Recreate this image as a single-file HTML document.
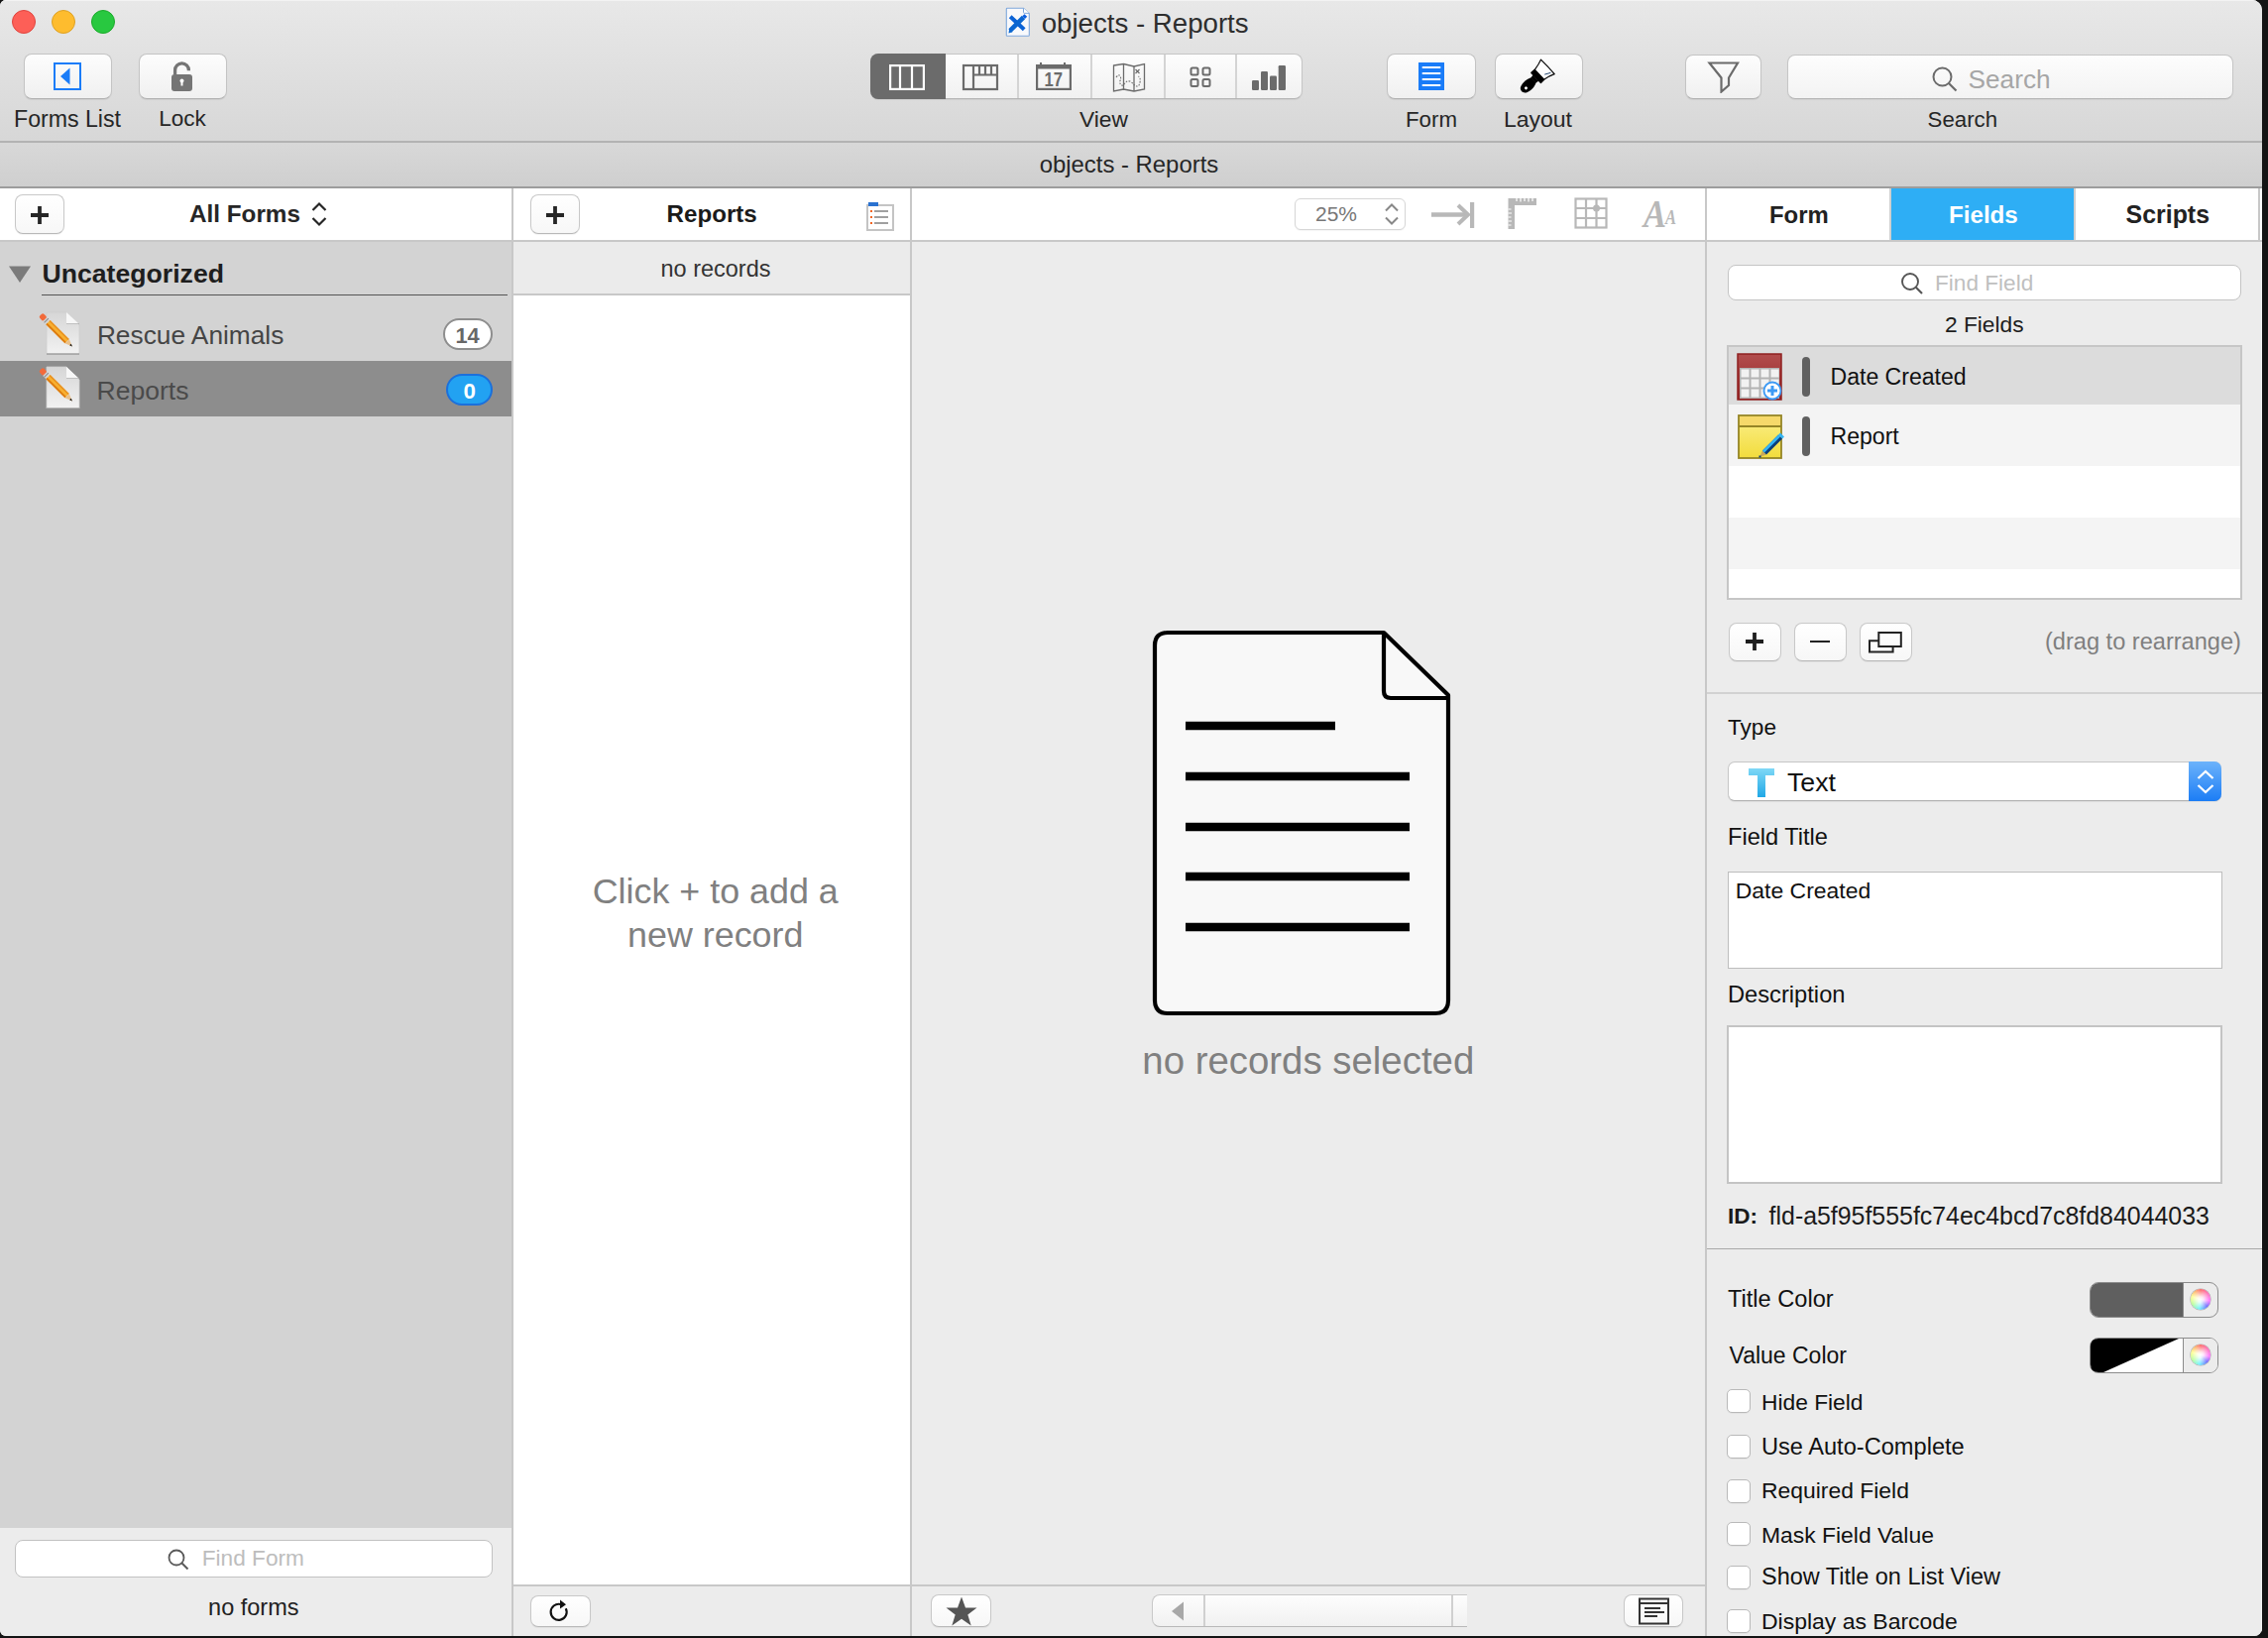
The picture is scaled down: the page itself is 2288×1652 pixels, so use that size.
<!DOCTYPE html><html><head><meta charset="utf-8"><style>
html,body{margin:0;padding:0;width:2288px;height:1652px;overflow:hidden;background:#141414;}
#w{position:absolute;left:0;top:0;width:2282px;height:1650px;border-radius:6px 10px 8px 6px;overflow:hidden;background:#ececec;}
.a{position:absolute;}
.t{position:absolute;white-space:nowrap;font-family:"Liberation Sans",sans-serif;}
</style></head><body><div id="w">
<div class="a" style="left:0px;top:0px;width:2282px;height:142px;background:linear-gradient(#e8e8e8,#d7d7d7);"></div>
<div class="a" style="left:0px;top:0px;width:2282px;height:1px;background:#f3f3f3;"></div>
<div class="a" style="left:0px;top:142px;width:2282px;height:2px;background:#b3b3b3;"></div>
<div class="a" style="left:12px;top:10px;width:24px;height:24px;background:#fd5f57;border:1px solid #e0443e;border-radius:50%;box-sizing:border-box;"></div>
<div class="a" style="left:52px;top:10px;width:24px;height:24px;background:#febc2e;border:1px solid #dea123;border-radius:50%;box-sizing:border-box;"></div>
<div class="a" style="left:92px;top:10px;width:24px;height:24px;background:#28c840;border:1px solid #1aab29;border-radius:50%;box-sizing:border-box;"></div>
<svg class="a" style="left:1014px;top:7px" width="26" height="31" viewBox="0 0 26 31"><path d="M1.3 2 Q1.3 1.2 2 1.2 H18.5 L24.3 6.8 V28.5 Q24.3 29.3 23.5 29.3 H2 Q1.3 29.3 1.3 28.5 Z" fill="#f8f9fc" stroke="#7fa8dc" stroke-width="1.1"/><path d="M18.5 1.2 V5.6 Q18.5 6.3 19.2 6.3 H24.3" fill="#fff" stroke="#7fa8dc" stroke-width="1"/><path d="M5.2 9.8 L19.2 22.8" stroke="#0a62d6" stroke-width="4"/><path d="M5 23.8 L18.5 10.5" stroke="#0a66d0" stroke-width="4.6"/><path d="M3.5 26.5 L4.2 22 L7.5 25.2 Z" fill="#0a66d0"/><path d="M17.3 9.2 L19.5 7.2 L22.2 9.8 L20 12 Z" fill="#0a5ee0"/></svg>
<div class="t" style="left:1050.70px;top:9.59px;font-size:27.65px;line-height:27.65px;color:#2e2e2e;">objects - Reports</div>
<div class="a" style="left:23.5px;top:55px;width:89.0px;height:44px;margin-top:-0.7px;height:45.3px !important;background:linear-gradient(#fdfdfd,#f0f0f0);border:1px solid #c4c4c4;border-bottom-color:#b0b0b0;border-radius:8px;box-sizing:border-box;box-shadow:0 1px 1px rgba(0,0,0,0.06);"></div>
<svg class="a" style="left:53px;top:62px" width="30" height="30" viewBox="0 0 30 30"><rect x="2" y="2" width="26" height="26" fill="none" stroke="#1a7cf8" stroke-width="2"/><path d="M8 15 L17.5 6.5 V23.5 Z" fill="#1a7cf8"/></svg>
<div class="a" style="left:139.5px;top:55px;width:89.0px;height:44px;margin-top:-0.7px;height:45.3px !important;background:linear-gradient(#fdfdfd,#f0f0f0);border:1px solid #c4c4c4;border-bottom-color:#b0b0b0;border-radius:8px;box-sizing:border-box;box-shadow:0 1px 1px rgba(0,0,0,0.06);"></div>
<svg class="a" style="left:170px;top:60px" width="28" height="34" viewBox="0 0 28 34"><path d="M6.6 15.5 V10.7 A6.9 6.9 0 0 1 20.4 10.7 V11.3" fill="none" stroke="#757575" stroke-width="3.3"/><rect x="3" y="15" width="21" height="17" rx="3" fill="#757575"/><circle cx="13.5" cy="21.5" r="2" fill="#fff"/><rect x="12.5" y="21.5" width="2" height="5" fill="#fff"/></svg>
<div class="t" style="left:14.00px;top:108.91px;font-size:23.14px;line-height:23.14px;color:#262626;">Forms List</div>
<div class="t" style="left:160.15px;top:109.40px;font-size:22.55px;line-height:22.55px;color:#262626;">Lock</div>
<div class="a" style="left:878px;top:54px;width:436px;height:46px;background:linear-gradient(#fdfdfd,#f1f1f1);border:1px solid #c6c6c6;border-bottom-color:#b4b4b4;border-radius:8px;box-sizing:border-box;box-shadow:0 1px 1px rgba(0,0,0,0.06);"></div>
<div class="a" style="left:878px;top:54px;width:76px;height:46px;background:#6b6b6b;border-radius:8px 0 0 8px;"></div>
<div class="a" style="left:1026px;top:55px;width:2px;height:44px;background:#d4d4d4;"></div>
<div class="a" style="left:1100px;top:55px;width:2px;height:44px;background:#d4d4d4;"></div>
<div class="a" style="left:1174px;top:55px;width:2px;height:44px;background:#d4d4d4;"></div>
<div class="a" style="left:1246px;top:55px;width:2px;height:44px;background:#d4d4d4;"></div>
<svg class="a" style="left:897px;top:65px" width="36" height="26" viewBox="0 0 36 26"><rect x="1.1" y="1.1" width="33.8" height="23.8" fill="none" stroke="#fff" stroke-width="2.2"/><path d="M11 1 V25 M23 1 V25" stroke="#fff" stroke-width="2.2"/></svg>
<svg class="a" style="left:970px;top:64px" width="38" height="28" viewBox="0 0 38 28"><rect x="2" y="2" width="34" height="24" fill="none" stroke="#6b6b6b" stroke-width="2.2"/><path d="M12 2 V26 M12 11.5 H36 M18 2 V11.5 M24 2 V11.5 M30 2 V11.5" stroke="#6b6b6b" stroke-width="2.2"/></svg>
<svg class="a" style="left:1044px;top:62px" width="38" height="30" viewBox="0 0 38 30"><rect x="2.1" y="4.1" width="33.8" height="23.8" fill="none" stroke="#6b6b6b" stroke-width="2.2"/><rect x="1" y="3" width="36" height="4.5" fill="#6b6b6b"/><rect x="5" y="1" width="2" height="3" fill="#6b6b6b"/><rect x="29" y="1" width="2" height="3" fill="#6b6b6b"/><text x="9.5" y="25" font-family="Liberation Sans" font-weight="700" font-size="21" textLength="18.5" lengthAdjust="spacingAndGlyphs" fill="#6b6b6b">17</text></svg>
<svg class="a" style="left:1122px;top:63px" width="34" height="30" viewBox="0 0 34 30"><path d="M1.5 3 L11.5 1.5 L22 4 L32.5 1.5 V27 L22 29 L11.5 27 L1.5 29 Z" fill="none" stroke="#6b6b6b" stroke-width="1.3"/><path d="M11.5 1.5 V27 M22 4 V29" stroke="#6b6b6b" stroke-width="1.3"/><path d="M4 15 Q7 11 8.5 14.5 Q9 18 7.5 19 Q8 24 11.5 23 Q14 18 18 19 Q21 21 22.5 23 Q27 26 28 20 Q29 16 26.5 14" fill="none" stroke="#6b6b6b" stroke-width="1.1" stroke-dasharray="1.6 1.4"/><path d="M23.5 7 L27.5 11 M27.5 7 L23.5 11" stroke="#6b6b6b" stroke-width="1.2"/></svg>
<svg class="a" style="left:1199px;top:67px" width="24" height="22" viewBox="0 0 24 22"><rect x="2.5" y="1.5" width="7" height="7" rx="1.5" fill="none" stroke="#6b6b6b" stroke-width="2"/><rect x="14.5" y="1.5" width="7" height="7" rx="1.5" fill="none" stroke="#6b6b6b" stroke-width="2"/><rect x="2.5" y="13" width="7" height="7" rx="1.5" fill="none" stroke="#6b6b6b" stroke-width="2"/><rect x="14.5" y="13" width="7" height="7" rx="1.5" fill="none" stroke="#6b6b6b" stroke-width="2"/></svg>
<svg class="a" style="left:1262px;top:65px" width="36" height="27" viewBox="0 0 36 27"><rect x="1" y="16" width="7" height="10" rx="1.2" fill="#6b6b6b"/><rect x="10" y="7" width="7" height="19" rx="1.2" fill="#6b6b6b"/><rect x="19" y="11.5" width="7" height="14.5" rx="1.2" fill="#6b6b6b"/><rect x="27.7" y="1" width="7.3" height="25" rx="1.2" fill="#6b6b6b"/></svg>
<div class="t" style="left:1089.00px;top:109.23px;font-size:22.76px;line-height:22.76px;color:#262626;">View</div>
<div class="a" style="left:1398.5px;top:55px;width:90.0px;height:44px;margin-top:-0.7px;height:45.3px !important;background:linear-gradient(#fdfdfd,#f0f0f0);border:1px solid #c4c4c4;border-bottom-color:#b0b0b0;border-radius:8px;box-sizing:border-box;box-shadow:0 1px 1px rgba(0,0,0,0.06);"></div>
<svg class="a" style="left:1430px;top:62px" width="28" height="30" viewBox="0 0 28 30"><rect x="1" y="1" width="26" height="28" fill="#1a7cf8"/><path d="M5.5 6 H22.5 M5.5 12 H22.5 M5.5 18 H22.5 M5.5 24 H22.5" stroke="#fff" stroke-width="2" stroke-linecap="round"/></svg>
<div class="a" style="left:1507.5px;top:55px;width:89.0px;height:44px;margin-top:-0.7px;height:45.3px !important;background:linear-gradient(#fdfdfd,#f0f0f0);border:1px solid #c4c4c4;border-bottom-color:#b0b0b0;border-radius:8px;box-sizing:border-box;box-shadow:0 1px 1px rgba(0,0,0,0.06);"></div>
<svg class="a" style="left:1531px;top:57px" width="42" height="40" viewBox="0 0 42 40"><g transform="translate(30.3 10.4) rotate(46.7)"><path d="M-10 0 Q0 -0.5 10 0 Q7.8 5 6.8 11.5 H-6.8 Q-7.8 5 -10 0 Z" fill="#fff" stroke="#000" stroke-width="1.2" stroke-linejoin="round"/><path d="M6.5 1.8 L3.5 7.5" stroke="#1b3f6a" stroke-width="0.9"/><rect x="-7.6" y="11" width="15.2" height="5.8" rx="0.8" fill="#000"/><path d="M-4.2 16.5 H4.2 L3.6 20 H-3.6 Z" fill="#000"/><path d="M-3.6 19.5 C-6.2 24 -5.8 32 -3.2 34.8 Q0 37.2 3.2 34.8 C5.8 32 6.2 24 3.6 19.5 Z" fill="#000"/><circle cx="0.6" cy="30.6" r="1.5" fill="#fff"/></g></svg>
<div class="t" style="left:1418.00px;top:109.62px;font-size:22.29px;line-height:22.29px;color:#262626;">Form</div>
<div class="t" style="left:1517.00px;top:109.04px;font-size:22.98px;line-height:22.98px;color:#262626;">Layout</div>
<div class="a" style="left:1699.5px;top:55.5px;width:77.0px;height:44.0px;margin-top:-0.7px;height:45.3px !important;background:linear-gradient(#fdfdfd,#f0f0f0);border:1px solid #c4c4c4;border-bottom-color:#b0b0b0;border-radius:8px;box-sizing:border-box;box-shadow:0 1px 1px rgba(0,0,0,0.06);"></div>
<svg class="a" style="left:1722px;top:62px" width="34" height="32" viewBox="0 0 34 32"><path d="M2.5 1.5 H31 L22 16.5 V24 L14.5 30.5 V16.5 Z" fill="none" stroke="#6b6b6b" stroke-width="2.2" stroke-linejoin="miter"/></svg>
<div class="a" style="left:1803px;top:55px;width:450px;height:45px;background:linear-gradient(#fdfdfd,#f3f3f3);border:1px solid #c6c6c6;border-bottom-color:#b4b4b4;border-radius:8px;box-sizing:border-box;box-shadow:0 1px 1px rgba(0,0,0,0.05);"></div>
<svg class="a" style="left:1948px;top:66px" width="28" height="28" viewBox="0 0 28 28"><circle cx="11.5" cy="11.5" r="9" fill="none" stroke="#6b6b6b" stroke-width="2"/><path d="M18 18 L25.5 25.5" stroke="#6b6b6b" stroke-width="2.2"/></svg>
<div class="t" style="left:1985.60px;top:66.81px;font-size:26.20px;line-height:26.20px;color:#a6a6a6;">Search</div>
<div class="t" style="left:1944.60px;top:109.68px;font-size:22.23px;line-height:22.23px;color:#262626;">Search</div>
<div class="a" style="left:0px;top:144px;width:2282px;height:44px;background:linear-gradient(#d8d8d8,#cfcfcf);"></div>
<div class="a" style="left:0px;top:188px;width:2282px;height:2px;background:#9d9d9d;"></div>
<div class="t" style="left:1048.65px;top:154.26px;font-size:23.90px;line-height:23.90px;color:#262626;">objects - Reports</div>
<div class="a" style="left:0px;top:190px;width:2282px;height:52px;background:#fff;"></div>
<div class="a" style="left:0px;top:242px;width:2282px;height:2px;background:#c8c8c8;"></div>
<div class="a" style="left:0px;top:244px;width:516px;height:1297px;background:#d3d3d3;"></div>
<div class="a" style="left:0px;top:1541px;width:516px;height:109px;background:#ececec;"></div>
<div class="a" style="left:516px;top:190px;width:2px;height:1460px;background:#c8c8c8;"></div>
<div class="a" style="left:518px;top:244px;width:400px;height:52px;background:#ebebeb;"></div>
<div class="a" style="left:518px;top:296px;width:400px;height:2px;background:#c8c8c8;"></div>
<div class="a" style="left:518px;top:298px;width:400px;height:1300px;background:#fff;"></div>
<div class="a" style="left:518px;top:1598px;width:400px;height:2px;background:#c8c8c8;"></div>
<div class="a" style="left:518px;top:1600px;width:400px;height:50px;background:#ececec;"></div>
<div class="a" style="left:918px;top:190px;width:2px;height:1460px;background:#c8c8c8;"></div>
<div class="a" style="left:920px;top:244px;width:800px;height:1354px;background:#ececec;"></div>
<div class="a" style="left:920px;top:1598px;width:800px;height:2px;background:#c8c8c8;"></div>
<div class="a" style="left:920px;top:1600px;width:800px;height:50px;background:#ececec;"></div>
<div class="a" style="left:1720px;top:190px;width:2px;height:1460px;background:#c8c8c8;"></div>
<div class="a" style="left:1722px;top:244px;width:560px;height:1406px;background:#ececec;"></div>
<div class="a" style="left:15px;top:196px;width:50px;height:40px;background:linear-gradient(#ffffff,#f7f7f7);border:1px solid #c8c8c8;border-bottom-color:#b8b8b8;border-radius:8px;box-sizing:border-box;box-shadow:0 1px 1px rgba(0,0,0,0.05);"></div>
<svg class="a" style="left:27px;top:204px" width="26" height="26" viewBox="0 0 26 26"><path d="M13 4 V22 M4 13 H22" stroke="#262626" stroke-width="3.8"/></svg>
<div class="t" style="left:191.00px;top:204.24px;font-size:24.28px;line-height:24.28px;color:#262626;font-weight:700;">All Forms</div>
<svg class="a" style="left:312px;top:203px" width="20" height="26" viewBox="0 0 20 26"><path d="M3.5 9 L10 2.5 L16.5 9 M3.5 17 L10 23.5 L16.5 17" fill="none" stroke="#262626" stroke-width="2.2"/></svg>
<svg class="a" style="left:8px;top:267px" width="24" height="19" viewBox="0 0 24 19"><path d="M1 1.5 H23 L12 18 Z" fill="#7b7b7b"/></svg>
<div class="t" style="left:42.50px;top:262.95px;font-size:26.63px;line-height:26.63px;color:#1e1e1e;font-weight:700;">Uncategorized</div>
<div class="a" style="left:42px;top:297px;width:470px;height:1px;background:#555;"></div>
<div class="a" style="left:0px;top:364px;width:516px;height:56px;background:#8d8d8d;"></div>
<svg class="a" style="left:38px;top:314px" width="44" height="46" viewBox="0 0 44 46"><defs><linearGradient id="dg1" x1="0" y1="0" x2="0" y2="1"><stop offset="0" stop-color="#d6d6d6"/><stop offset="1" stop-color="#f2f2f2"/></linearGradient></defs><path d="M9 1 H29 L42 14 V43 H9 Z" fill="url(#dg1)" stroke="#cfcfcf" stroke-width="0.8"/><path d="M9 43 H42" stroke="#6a6a6a" stroke-width="1.4" opacity="0.5"/><path d="M29 1 V12 Q29 13 30 13 H42 Z" fill="#f7f7f7"/><path d="M29 12.5 H42" stroke="#8a8a8a" stroke-width="1" opacity="0.5"/><g transform="translate(4.5 5) rotate(-45)"><rect x="-3" y="-2" width="6" height="6.5" rx="2" fill="#f26a3a"/><rect x="-3" y="4" width="6" height="4.5" fill="#d4d4d4"/><rect x="-3" y="5.5" width="6" height="1" fill="#8a8a8a"/><rect x="-3" y="8.5" width="6" height="27" fill="#f8b030"/><rect x="-3" y="8.5" width="1.8" height="27" fill="#dd7a10"/><rect x="1.4" y="8.5" width="1.6" height="27" fill="#e89020"/><path d="M-3 35.5 L3 35.5 L0 43 Z" fill="#e9c08a"/><path d="M-1.1 40.3 L1.1 40.3 L0 43 Z" fill="#111"/></g></svg>
<svg class="a" style="left:38px;top:369px" width="44" height="46" viewBox="0 0 44 46"><defs><linearGradient id="dg2" x1="0" y1="0" x2="0" y2="1"><stop offset="0" stop-color="#d6d6d6"/><stop offset="1" stop-color="#f2f2f2"/></linearGradient></defs><path d="M9 1 H29 L42 14 V43 H9 Z" fill="url(#dg2)" stroke="#cfcfcf" stroke-width="0.8"/><path d="M9 43 H42" stroke="#6a6a6a" stroke-width="1.4" opacity="0.5"/><path d="M29 1 V12 Q29 13 30 13 H42 Z" fill="#f7f7f7"/><path d="M29 12.5 H42" stroke="#8a8a8a" stroke-width="1" opacity="0.5"/><g transform="translate(4.5 5) rotate(-45)"><rect x="-3" y="-2" width="6" height="6.5" rx="2" fill="#f26a3a"/><rect x="-3" y="4" width="6" height="4.5" fill="#d4d4d4"/><rect x="-3" y="5.5" width="6" height="1" fill="#8a8a8a"/><rect x="-3" y="8.5" width="6" height="27" fill="#f8b030"/><rect x="-3" y="8.5" width="1.8" height="27" fill="#dd7a10"/><rect x="1.4" y="8.5" width="1.6" height="27" fill="#e89020"/><path d="M-3 35.5 L3 35.5 L0 43 Z" fill="#e9c08a"/><path d="M-1.1 40.3 L1.1 40.3 L0 43 Z" fill="#111"/></g></svg>
<div class="t" style="left:97.90px;top:325.14px;font-size:26.29px;line-height:26.29px;color:#454545;">Rescue Animals</div>
<div class="a" style="left:447px;top:321px;width:50px;height:32px;background:#fff;border:2px solid #8e8e8e;border-radius:16px;box-sizing:border-box;"></div>
<div class="t" style="left:459.50px;top:327.98px;font-size:21.75px;line-height:21.75px;color:#676767;font-weight:700;">14</div>
<div class="t" style="left:97.50px;top:380.72px;font-size:26.55px;line-height:26.55px;color:#4a4a4a;">Reports</div>
<div class="a" style="left:450px;top:377px;width:47px;height:32px;background:#22a2f2;border:2px solid #1b70dc;border-radius:16px;box-sizing:border-box;"></div>
<div class="t" style="left:467.60px;top:384.18px;font-size:22.34px;line-height:22.34px;color:#fff;font-weight:700;">0</div>
<div class="a" style="left:15px;top:1553px;width:482px;height:38px;background:#fff;border:1px solid #c2c2c2;border-radius:8px;box-sizing:border-box;"></div>
<svg class="a" style="left:168px;top:1561px" width="26" height="26" viewBox="0 0 26 26"><circle cx="10" cy="10" r="7.5" fill="none" stroke="#5a5a5a" stroke-width="1.8"/><path d="M15.5 15.5 L21.5 21.5" stroke="#5a5a5a" stroke-width="2"/></svg>
<div class="t" style="left:203.70px;top:1559.51px;font-size:22.67px;line-height:22.67px;color:#bdbdbd;">Find Form</div>
<div class="t" style="left:210.05px;top:1609.98px;font-size:23.52px;line-height:23.52px;color:#222;">no forms</div>
<div class="a" style="left:535px;top:196px;width:50px;height:40px;background:linear-gradient(#ffffff,#f7f7f7);border:1px solid #c8c8c8;border-bottom-color:#b8b8b8;border-radius:8px;box-sizing:border-box;box-shadow:0 1px 1px rgba(0,0,0,0.05);"></div>
<svg class="a" style="left:547px;top:204px" width="26" height="26" viewBox="0 0 26 26"><path d="M13 4 V22 M4 13 H22" stroke="#262626" stroke-width="3.8"/></svg>
<div class="t" style="left:672.60px;top:204.26px;font-size:24.14px;line-height:24.14px;color:#1a1a1a;font-weight:700;">Reports</div>
<svg class="a" style="left:872px;top:202px" width="32" height="33" viewBox="0 0 32 33"><rect x="3" y="5" width="26" height="25" fill="#fff" stroke="#c4c4c4" stroke-width="2"/><rect x="4" y="2" width="10" height="4" fill="#2a72d0"/><rect x="6" y="10" width="2" height="2" fill="#f26522"/><rect x="6" y="16" width="2" height="2" fill="#f26522"/><rect x="6" y="22" width="2" height="2" fill="#f26522"/><path d="M10 11 H24 M10 17 H24 M10 23 H24" stroke="#a0a0a0" stroke-width="2"/></svg>
<div class="t" style="left:666.50px;top:259.61px;font-size:23.49px;line-height:23.49px;color:#333;">no records</div>
<div class="t" style="left:597.75px;top:882.17px;font-size:35.83px;line-height:35.83px;color:#808080;">Click + to add a</div>
<div class="t" style="left:633.00px;top:926.14px;font-size:35.86px;line-height:35.86px;color:#808080;">new record</div>
<div class="a" style="left:535px;top:1609px;width:61px;height:32px;background:linear-gradient(#ffffff,#f7f7f7);border:1px solid #c8c8c8;border-bottom-color:#b8b8b8;border-radius:8px;box-sizing:border-box;box-shadow:0 1px 1px rgba(0,0,0,0.05);"></div>
<svg class="a" style="left:553px;top:1612px" width="26" height="26" viewBox="0 0 26 26"><path d="M17.8 10.2 A8 8 0 1 1 12.5 6" fill="none" stroke="#111" stroke-width="2.2"/><path d="M12 1.5 L18 6.2 L12 10.5 Z" fill="#111"/></svg>
<div class="a" style="left:1306px;top:200px;width:112px;height:32px;background:#fff;border:1px solid #d6d6d6;border-radius:6px;box-sizing:border-box;box-shadow:0 1px 1px rgba(0,0,0,0.04);"></div>
<div class="t" style="left:1327.00px;top:206.34px;font-size:20.97px;line-height:20.97px;color:#777;">25%</div>
<svg class="a" style="left:1395px;top:204px" width="18" height="24" viewBox="0 0 18 24"><path d="M3 8.5 L9 2.5 L15 8.5 M3 15.5 L9 21.5 L15 15.5" fill="none" stroke="#888" stroke-width="2"/></svg>
<svg class="a" style="left:1443px;top:203px" width="46" height="28" viewBox="0 0 46 28"><path d="M1 13.5 H37" stroke="#b8b8b8" stroke-width="4.5"/><path d="M28 4 L38 13.5 L28 23" fill="none" stroke="#b8b8b8" stroke-width="4"/><rect x="40" y="1" width="4.2" height="26" fill="#b8b8b8"/></svg>
<svg class="a" style="left:1520px;top:199px" width="31" height="33" viewBox="0 0 31 33"><path d="M1.5 1 H30 V8 H8 V32 H1.5 Z" fill="#b8b8b8"/><path d="M10 1 V4 M14 1 V4.5 M18 1 V4 M22 1 V4.5 M26 1 V4 M1.5 12 H4.5 M1.5 16 H5 M1.5 20 H4.5 M1.5 24 H5 M1.5 28 H4.5" stroke="#fff" stroke-width="1.2"/></svg>
<svg class="a" style="left:1588px;top:199px" width="35" height="33" viewBox="0 0 35 33"><rect x="1.5" y="1.5" width="31" height="29" fill="none" stroke="#b8b8b8" stroke-width="2.2"/><path d="M12 1.5 V30.5 M22.5 1.5 V30.5 M1.5 11 H32.5 M1.5 21 H32.5" stroke="#b8b8b8" stroke-width="2.2"/><circle cx="22.5" cy="11" r="3.5" fill="#b8b8b8"/></svg>
<svg class="a" style="left:1655px;top:198px" width="40" height="34" viewBox="0 0 40 34"><text x="3" y="31" font-family="Liberation Serif" font-style="italic" font-weight="700" font-size="40" textLength="23" lengthAdjust="spacingAndGlyphs" fill="#b8b8b8">A</text><text x="25" y="28" font-family="Liberation Serif" font-style="italic" font-weight="700" font-size="22" textLength="11" lengthAdjust="spacingAndGlyphs" fill="#b8b8b8">A</text></svg>
<svg class="a" style="left:1160px;top:633px" width="306" height="394" viewBox="0 0 306 394"><path d="M17 5 H236 L301 68 V376 Q301 389 288 389 H18 Q5 389 5 376 V18 Q5 5 18 5 Z" fill="#f8f8f8" stroke="#000" stroke-width="4.2" stroke-linejoin="round"/><path d="M236 5 V64 Q236 71 243 71 H301" fill="none" stroke="#000" stroke-width="4.2"/><path d="M36 99 H187 M36 150 H262 M36 201 H262 M36 251 H262 M36 302 H262" stroke="#000" stroke-width="8.5"/></svg>
<div class="t" style="left:1152.35px;top:1050.60px;font-size:38.38px;line-height:38.38px;color:#808080;">no records selected</div>
<div class="a" style="left:939px;top:1608px;width:61px;height:33px;background:linear-gradient(#ffffff,#f7f7f7);border:1px solid #c8c8c8;border-bottom-color:#b8b8b8;border-radius:8px;box-sizing:border-box;box-shadow:0 1px 1px rgba(0,0,0,0.05);"></div>
<svg class="a" style="left:953px;top:1609px" width="34" height="32" viewBox="0 0 34 32"><path d="M17 1.5 L21 12.5 L32.5 12.5 L23.3 19.4 L26.7 30.5 L17 23.8 L7.3 30.5 L10.7 19.4 L1.5 12.5 L13 12.5 Z" fill="#555"/></svg>
<div class="a" style="left:1162px;top:1608px;width:318px;height:33px;background:linear-gradient(#fdfdfd,#f1f1f1);border:1px solid #c8c8c8;border-right:none;border-bottom-color:#b8b8b8;border-radius:8px 0 0 8px;box-sizing:border-box;"></div>
<div class="a" style="left:1214px;top:1609px;width:2px;height:31px;background:#d0d0d0;"></div>
<div class="a" style="left:1464px;top:1609px;width:2px;height:31px;background:#d0d0d0;"></div>
<svg class="a" style="left:1180px;top:1614px" width="16" height="22" viewBox="0 0 16 22"><path d="M14 1.5 V20.5 L2 11 Z" fill="#a8a8a8"/></svg>
<div class="a" style="left:1638px;top:1608px;width:60px;height:33px;background:linear-gradient(#ffffff,#f7f7f7);border:1px solid #c8c8c8;border-bottom-color:#b8b8b8;border-radius:8px;box-sizing:border-box;box-shadow:0 1px 1px rgba(0,0,0,0.05);"></div>
<svg class="a" style="left:1652px;top:1611px" width="34" height="28" viewBox="0 0 34 28"><rect x="2" y="1.5" width="29" height="25" fill="none" stroke="#333" stroke-width="2"/><path d="M2 6 H31 M7 11 H23 M7 15 H27 M7 19 H20" stroke="#333" stroke-width="1.8"/></svg>
<div class="a" style="left:1722px;top:190px;width:560px;height:52px;background:#fff;"></div>
<div class="a" style="left:1907px;top:190px;width:186px;height:52px;background:#2eaef5;"></div>
<div class="a" style="left:1906px;top:190px;width:2px;height:52px;background:#d0d0d0;"></div>
<div class="a" style="left:2092px;top:190px;width:2px;height:52px;background:#d0d0d0;"></div>
<div class="a" style="left:2278px;top:190px;width:2px;height:52px;background:#c8c8c8;"></div>
<div class="a" style="left:2281px;top:244px;width:1px;height:1406px;background:#f6f6f6;"></div>
<div class="t" style="left:1785.00px;top:204.88px;font-size:23.88px;line-height:23.88px;color:#222;font-weight:700;">Form</div>
<div class="t" style="left:1966.00px;top:204.65px;font-size:24.15px;line-height:24.15px;color:#fff;font-weight:700;">Fields</div>
<div class="t" style="left:2144.60px;top:204.02px;font-size:24.90px;line-height:24.90px;color:#222;font-weight:700;">Scripts</div>
<div class="a" style="left:1743px;top:267px;width:518px;height:36px;background:#fff;border:1px solid #c4c4c4;border-radius:8px;box-sizing:border-box;"></div>
<svg class="a" style="left:1916px;top:273px" width="26" height="28" viewBox="0 0 26 28"><circle cx="11" cy="11" r="8" fill="none" stroke="#555" stroke-width="1.9"/><path d="M16.8 16.8 L23 23" stroke="#555" stroke-width="2.1"/></svg>
<div class="t" style="left:1952.00px;top:275.35px;font-size:22.62px;line-height:22.62px;color:#bfbfbf;">Find Field</div>
<div class="t" style="left:1961.90px;top:315.51px;font-size:22.78px;line-height:22.78px;color:#1e1e1e;">2 Fields</div>
<div class="a" style="left:1742px;top:348px;width:520px;height:257px;background:#fff;border:2px solid #c6c6c6;box-sizing:border-box;"></div>
<div class="a" style="left:1744px;top:350px;width:516px;height:58px;background:#dcdcdc;"></div>
<div class="a" style="left:1744px;top:408px;width:516px;height:62px;background:#f4f4f4;"></div>
<div class="a" style="left:1744px;top:522px;width:516px;height:52px;background:#f4f4f4;"></div>
<svg class="a" style="left:1752px;top:356px" width="48" height="50" viewBox="0 0 48 50"><defs><linearGradient id="cg" x1="0" y1="0" x2="0" y2="1"><stop offset="0" stop-color="#b24d4d"/><stop offset="1" stop-color="#952626"/></linearGradient></defs><rect x="1" y="1" width="44" height="46" fill="url(#cg)" stroke="#8f1f1f" stroke-width="1.5"/><rect x="3" y="15" width="40" height="31" fill="#b3b3b3"/><rect x="4.5" y="16.5" width="8" height="8" fill="#f2f2f2"/><rect x="14.5" y="16.5" width="8" height="8" fill="#f2f2f2"/><rect x="24.5" y="16.5" width="8" height="8" fill="#f2f2f2"/><rect x="34.5" y="16.5" width="8" height="8" fill="#f2f2f2"/><rect x="4.5" y="26.5" width="8" height="8" fill="#f2f2f2"/><rect x="14.5" y="26.5" width="8" height="8" fill="#f2f2f2"/><rect x="24.5" y="26.5" width="8" height="8" fill="#f2f2f2"/><rect x="34.5" y="26.5" width="8" height="8" fill="#f2f2f2"/><rect x="4.5" y="36.5" width="8" height="8" fill="#f2f2f2"/><rect x="14.5" y="36.5" width="8" height="8" fill="#f2f2f2"/><rect x="24.5" y="36.5" width="8" height="8" fill="#f2f2f2"/><rect x="34.5" y="36.5" width="8" height="8" fill="#f2f2f2"/><circle cx="36" cy="38" r="8.5" fill="#fff" stroke="#3c9af5" stroke-width="1.8"/><path d="M36 33 V43 M31 38 H41" stroke="#3c9af5" stroke-width="3"/></svg>
<svg class="a" style="left:1751px;top:417.5px" width="50" height="48" viewBox="0 0 50 48"><defs><linearGradient id="ng" x1="0" y1="0" x2="0" y2="1"><stop offset="0" stop-color="#fbef8a"/><stop offset="1" stop-color="#f2dc3c"/></linearGradient></defs><rect x="3" y="1" width="43" height="43" fill="url(#ng)" stroke="#958526" stroke-width="1.8"/><rect x="4" y="2" width="41" height="9.5" fill="#f6d96a"/><path d="M3 12 H46" stroke="#958526" stroke-width="1.8"/><path d="M27 36.5 L31 40.5 L24 43 Z" fill="#c9a95a"/><path d="M27 36.5 L43 20.5 L47 24.5 L31 40.5 Z" fill="#0b3d7a"/><path d="M27 36.5 L43 20.5 L45 22.5 L29 38.5 Z" fill="#33b4f5"/><path d="M43 20.5 L45 18.5 L49 22.5 L47 24.5 Z" fill="#33b4f5"/><rect x="23.5" y="41.5" width="2" height="2" fill="#0b3d7a"/></svg>
<div class="a" style="left:1818px;top:360px;width:8px;height:40px;background:#606060;border-radius:4px;"></div>
<div class="a" style="left:1818px;top:420px;width:8px;height:40px;background:#606060;border-radius:4px;"></div>
<div class="t" style="left:1846.50px;top:368.97px;font-size:23.07px;line-height:23.07px;color:#111;">Date Created</div>
<div class="t" style="left:1846.50px;top:429.36px;font-size:23.08px;line-height:23.08px;color:#111;">Report</div>
<div class="a" style="left:1744px;top:627.5px;width:53px;height:39.0px;background:linear-gradient(#ffffff,#f7f7f7);border:1px solid #c8c8c8;border-bottom-color:#b8b8b8;border-radius:8px;box-sizing:border-box;box-shadow:0 1px 1px rgba(0,0,0,0.05);"></div>
<div class="a" style="left:1810px;top:627.5px;width:53px;height:39.0px;background:linear-gradient(#ffffff,#f7f7f7);border:1px solid #c8c8c8;border-bottom-color:#b8b8b8;border-radius:8px;box-sizing:border-box;box-shadow:0 1px 1px rgba(0,0,0,0.05);"></div>
<div class="a" style="left:1876px;top:627.5px;width:53px;height:39.0px;background:linear-gradient(#ffffff,#f7f7f7);border:1px solid #c8c8c8;border-bottom-color:#b8b8b8;border-radius:8px;box-sizing:border-box;box-shadow:0 1px 1px rgba(0,0,0,0.05);"></div>
<svg class="a" style="left:1757px;top:634px" width="26" height="26" viewBox="0 0 26 26"><path d="M13 4 V22 M4 13 H22" stroke="#1e1e1e" stroke-width="3.8"/></svg>
<svg class="a" style="left:1823px;top:634px" width="26" height="26" viewBox="0 0 26 26"><path d="M3 13 H23" stroke="#222" stroke-width="2"/></svg>
<svg class="a" style="left:1884px;top:635px" width="36" height="26" viewBox="0 0 36 26"><rect x="11.3" y="3" width="22.5" height="14" fill="none" stroke="#222" stroke-width="2"/><path d="M11.3 11.3 H2 V22.6 H25.6 V17" fill="none" stroke="#222" stroke-width="2"/></svg>
<div class="t" style="left:2063.00px;top:636.02px;font-size:23.59px;line-height:23.59px;color:#7f7f7f;">(drag to rearrange)</div>
<div class="a" style="left:1722px;top:698px;width:560px;height:2px;background:#d2d2d2;"></div>
<div class="t" style="left:1743.00px;top:723.36px;font-size:22.61px;line-height:22.61px;color:#111;">Type</div>
<div class="a" style="left:1743px;top:768px;width:498px;height:40px;background:#fff;border:1px solid #c6c6c6;border-bottom-color:#b0b0b0;border-radius:7px;box-sizing:border-box;box-shadow:0 1px 1px rgba(0,0,0,0.06);"></div>
<div class="a" style="left:2208px;top:768px;width:33px;height:40px;background:linear-gradient(#6cb3fb,#1c7df5);border-radius:0 7px 7px 0;"></div>
<svg class="a" style="left:2212.5px;top:774px" width="24" height="30" viewBox="0 0 24 30"><path d="M4.5 11 L12 4 L19.5 11 M4.5 18 L12 25 L19.5 18" fill="none" stroke="#fff" stroke-width="2.3"/></svg>
<svg class="a" style="left:1762px;top:773px" width="30" height="33" viewBox="0 0 30 33"><defs><linearGradient id="tg" x1="0" y1="0" x2="0" y2="1"><stop offset="0" stop-color="#7fd8f6"/><stop offset="1" stop-color="#20a8e6"/></linearGradient></defs><path d="M2 2 H28 V9 H19 V31 H11 V9 H2 Z" fill="url(#tg)"/></svg>
<div class="t" style="left:1803.00px;top:776.09px;font-size:26.70px;line-height:26.70px;color:#111;">Text</div>
<div class="t" style="left:1743.00px;top:832.82px;font-size:23.60px;line-height:23.60px;color:#111;">Field Title</div>
<div class="a" style="left:1743px;top:879px;width:499px;height:98px;background:#fff;border:1px solid #bdbdbd;box-sizing:border-box;"></div>
<div class="t" style="left:1750.80px;top:886.97px;font-size:22.95px;line-height:22.95px;color:#111;">Date Created</div>
<div class="t" style="left:1743.00px;top:992.44px;font-size:23.69px;line-height:23.69px;color:#111;">Description</div>
<div class="a" style="left:1742px;top:1034px;width:500px;height:160px;background:#fff;border:2px solid #c4c4c4;box-sizing:border-box;"></div>
<div class="t" style="left:1743.00px;top:1215.65px;font-size:22.50px;line-height:22.50px;color:#1a1a1a;font-weight:700;">ID:</div>
<div class="t" style="left:1784.60px;top:1213.62px;font-size:24.90px;line-height:24.90px;color:#1a1a1a;">fld-a5f95f555fc74ec4bcd7c8fd84044033</div>
<div class="a" style="left:1722px;top:1259px;width:560px;height:1px;background:#a9a9a9;"></div>
<div class="t" style="left:1743.00px;top:1298.81px;font-size:23.61px;line-height:23.61px;color:#111;">Title Color</div>
<div class="t" style="left:1744.50px;top:1355.72px;font-size:23.01px;line-height:23.01px;color:#111;">Value Color</div>
<div class="a" style="left:2108px;top:1293px;width:130px;height:36px;border:1.2px solid #8c8c8c;border-radius:9px;box-sizing:border-box;overflow:hidden;"></div>
<div class="a" style="left:2109px;top:1294px;width:93px;height:34px;background:#5f5f5f;border-radius:8px 0 0 8px;"></div>
<div class="a" style="left:2202px;top:1294px;width:1px;height:34px;background:#8c8c8c;"></div>
<div class="a" style="left:2209.5px;top:1300.4px;width:20.6px;height:20.6px;border-radius:50%;background:radial-gradient(circle, #fff 0%, rgba(255,255,255,0.85) 20%, rgba(255,255,255,0) 75%), conic-gradient(from 0deg, #ff5a5a, #ff60e0 22%, #ff60ff 27%, #5a5aff 38%, #60f0ff 52%, #b0ff90 66%, #ffff80 80%, #ffb060 90%, #ff5a5a);box-shadow:0 0 0 0.6px rgba(0,0,0,0.25);"></div>
<div class="a" style="left:2108px;top:1349px;width:130px;height:36px;background:#fff;border:1.2px solid #8c8c8c;border-radius:9px;box-sizing:border-box;overflow:hidden;"></div>
<div class="a" style="left:2203px;top:1350px;width:34px;height:34px;background:#ececec;border-radius:0 8px 8px 0;"></div>
<svg class="a" style="left:2109px;top:1350px" width="93" height="34" viewBox="0 0 93 34"><path d="M8 0 H89 L13 34 H8 Q0 34 0 26 V8 Q0 0 8 0 Z" fill="#000"/></svg>
<div class="a" style="left:2202px;top:1350px;width:1px;height:34px;background:#8c8c8c;"></div>
<div class="a" style="left:2209.5px;top:1356.4px;width:20.6px;height:20.6px;border-radius:50%;background:radial-gradient(circle, #fff 0%, rgba(255,255,255,0.85) 20%, rgba(255,255,255,0) 75%), conic-gradient(from 0deg, #ff5a5a, #ff60e0 22%, #ff60ff 27%, #5a5aff 38%, #60f0ff 52%, #b0ff90 66%, #ffff80 80%, #ffb060 90%, #ff5a5a);box-shadow:0 0 0 0.6px rgba(0,0,0,0.25);"></div>
<div class="a" style="left:1742px;top:1401px;width:24px;height:24px;background:#fff;border:1px solid #b9b9b9;border-radius:5px;box-sizing:border-box;box-shadow:0 1px 0 rgba(0,0,0,0.04);"></div>
<div class="t" style="left:1777.00px;top:1402.72px;font-size:22.77px;line-height:22.77px;color:#111;">Hide Field</div>
<div class="a" style="left:1742px;top:1447px;width:24px;height:24px;background:#fff;border:1px solid #b9b9b9;border-radius:5px;box-sizing:border-box;box-shadow:0 1px 0 rgba(0,0,0,0.04);"></div>
<div class="t" style="left:1777.00px;top:1447.81px;font-size:23.61px;line-height:23.61px;color:#111;">Use Auto-Complete</div>
<div class="a" style="left:1742px;top:1492px;width:24px;height:24px;background:#fff;border:1px solid #b9b9b9;border-radius:5px;box-sizing:border-box;box-shadow:0 1px 0 rgba(0,0,0,0.04);"></div>
<div class="t" style="left:1777.00px;top:1491.51px;font-size:22.90px;line-height:22.90px;color:#111;">Required Field</div>
<div class="a" style="left:1742px;top:1535px;width:24px;height:24px;background:#fff;border:1px solid #b9b9b9;border-radius:5px;box-sizing:border-box;box-shadow:0 1px 0 rgba(0,0,0,0.04);"></div>
<div class="t" style="left:1777.00px;top:1536.61px;font-size:22.90px;line-height:22.90px;color:#111;">Mask Field Value</div>
<div class="a" style="left:1742px;top:1579px;width:24px;height:24px;background:#fff;border:1px solid #b9b9b9;border-radius:5px;box-sizing:border-box;box-shadow:0 1px 0 rgba(0,0,0,0.04);"></div>
<div class="t" style="left:1777.00px;top:1579.43px;font-size:23.47px;line-height:23.47px;color:#111;">Show Title on List View</div>
<div class="a" style="left:1742px;top:1623px;width:24px;height:24px;background:#fff;border:1px solid #b9b9b9;border-radius:5px;box-sizing:border-box;box-shadow:0 1px 0 rgba(0,0,0,0.04);"></div>
<div class="t" style="left:1777.00px;top:1624.04px;font-size:22.98px;line-height:22.98px;color:#111;">Display as Barcode</div>
</div></body></html>
